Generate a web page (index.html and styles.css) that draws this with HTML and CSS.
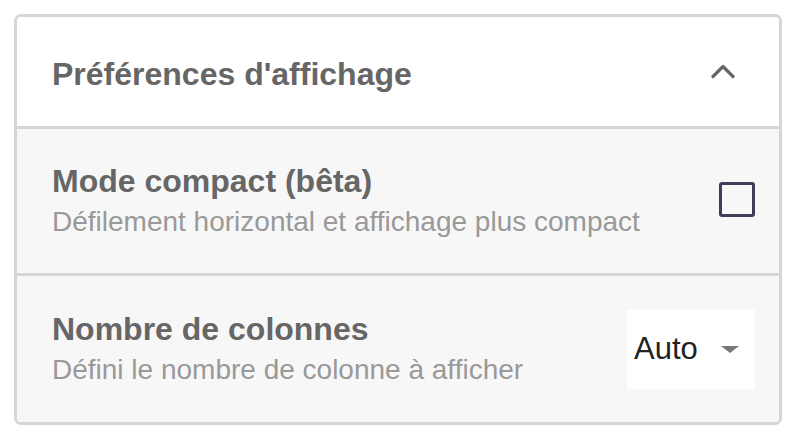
FILE: index.html
```html
<!DOCTYPE html>
<html lang="fr">

<head>
    <meta charset="UTF-8" />
    <meta name="viewport" content="width=device-width, initial-scale=1.0" />
    <title>Préférences d'affichage</title>
    <link rel="stylesheet" href="styles.css">
</head>

<body>
    <div class="prefs-card">
        <div class="prefs-header">
            <h2>Préférences d'affichage</h2>
            <svg class="chevron" width="24" height="16" viewBox="0 0 24 16">
                <polyline points="2,12.5 12,2.5 22,12.5" fill="none" stroke="#666" stroke-width="3.2" stroke-linecap="round" stroke-linejoin="round" />
            </svg>
        </div>
        <div class="prefs-row row-compact">
            <div class="row-text">
                <div class="row-title">Mode compact (bêta)</div>
                <div class="row-desc">Défilement horizontal et affichage plus compact</div>
            </div>
            <span class="checkbox"></span>
        </div>
        <div class="prefs-row row-columns">
            <div class="row-text">
                <div class="row-title">Nombre de colonnes</div>
                <div class="row-desc">Défini le nombre de colonne à afficher</div>
            </div>
            <div class="select">
                <span>Auto</span>
                <span class="caret"></span>
            </div>
        </div>
    </div>
</body>

</html>
```

FILE: styles.css
```css
:root {
    --border-color: #d6d6d6;
    --title-color: #666;
    --desc-color: #999;
    --row-bg: #f7f7f7;
}

* {
    box-sizing: border-box;
    margin: 0;
    padding: 0;
}

body {
    font-family: "Liberation Sans", Arial, sans-serif;
    background: white;
    padding: 14px;
}

.prefs-card {
    width: 768px;
    border: 3px solid var(--border-color);
    border-radius: 7px;
    overflow: hidden;
}

.prefs-header {
    height: 112px;
    background: white;
    border-bottom: 3px solid var(--border-color);
    display: flex;
    align-items: center;
    justify-content: space-between;
    padding: 0 44px 0 35px;
}

.prefs-header h2 {
    font-size: 32px;
    font-weight: bold;
    color: var(--title-color);
    padding-top: 5px;
}

.chevron {
    display: block;
}

.prefs-row {
    background: var(--row-bg);
    display: flex;
    align-items: center;
    justify-content: space-between;
    padding: 0 24px 0 35px;
}

.row-compact {
    height: 147px;
    border-bottom: 3px solid var(--border-color);
}

.row-columns {
    height: 146px;
}

.row-text {
    padding-top: 5px;
}

.row-title {
    font-size: 32px;
    font-weight: bold;
    color: var(--title-color);
    line-height: 36px;
}

.row-desc {
    font-size: 28px;
    color: var(--desc-color);
    line-height: 46px;
}

.checkbox {
    width: 36px;
    height: 35px;
    margin-bottom: 4px;
    border: 3px solid #3c3f55;
    border-radius: 3px;
}

.select {
    width: 128px;
    height: 79px;
    background: white;
    display: flex;
    align-items: center;
    justify-content: space-between;
    padding: 0 16px 0 7px;
    font-size: 31px;
    color: #222;
}

.caret {
    width: 0;
    height: 0;
    border-left: 9px solid transparent;
    border-right: 9px solid transparent;
    border-top: 7px solid #777;
}
```
